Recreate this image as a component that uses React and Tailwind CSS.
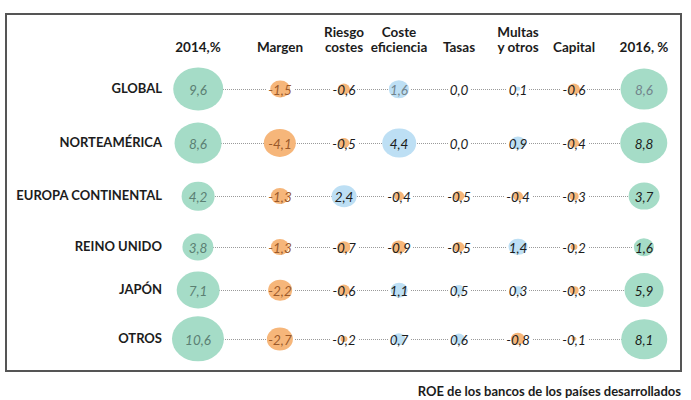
import React from "react";

const cols = "grid-cols-[191px_82px_64px_55px_60px_59px_56px_70px_36px]";

const headers = [
  ["2014,%"],
  ["Margen"],
  ["Riesgo", "costes"],
  ["Coste", "eficiencia"],
  ["Tasas"],
  ["Multas", "y otros"],
  ["Capital"],
  ["2016, %"],
];

const rows = [
  { name: "GLOBAL", h: "h-[54px]", v: [9.6, -1.5, -0.6, 1.6, 0.0, 0.1, -0.6, 8.6] },
  { name: "NORTEAMÉRICA", h: "h-[54px]", v: [8.6, -4.1, -0.5, 4.4, 0.0, 0.9, -0.4, 8.8] },
  { name: "EUROPA CONTINENTAL", h: "h-[52px]", v: [4.2, -1.3, 2.4, -0.4, -0.5, -0.4, -0.3, 3.7] },
  { name: "REINO UNIDO", h: "h-[50px]", v: [3.8, -1.3, -0.7, -0.9, -0.5, 1.4, -0.2, 1.6] },
  { name: "JAPÓN", h: "h-[36px]", v: [7.1, -2.2, -0.6, 1.1, 0.5, 0.3, -0.3, 5.9] },
  { name: "OTROS", h: "h-[62px]", v: [10.6, -2.7, -0.2, 0.7, 0.6, -0.8, -0.1, 8.1] },
];

function bubbleColor(col, v) {
  if (col === 0 || col === 7) return "#a5dcc7";
  return v < 0 ? "#f6b67a" : "#bddff4";
}

function textColor(row, col) {
  if (col === 0) return "text-[#5b8073]";
  if (col === 1) return "text-[#9b5a2b]";
  if (row === 0 && (col === 3 || col === 7)) return "text-[#72848c]";
  return "text-[#1c1c1c]";
}

function Cell({ value, row, col }) {
  const w = 16 * Math.sqrt(Math.abs(value));
  return (
    <div className="w-0 flex justify-center">
      <span className="relative shrink-0 bg-white px-[2px] whitespace-nowrap">
        {w > 0 && (
          <span
            className="absolute left-1/2 top-1/2 -translate-x-1/2 -translate-y-1/2 rounded-[50%] z-0"
            style={{ width: w, height: w * 0.87, background: bubbleColor(col, value) }}
          />
        )}
        <span className={`relative italic text-[13.5px] leading-[16px] ${textColor(row, col)}`}>
          {value.toFixed(1).replace(".", ",")}
        </span>
      </span>
    </div>
  );
}

export default function App() {
  return (
    <div className="w-[691px] h-[400px] bg-white font-['Lato','Liberation_Sans',sans-serif] text-[#1c1c1c]">
      <div className="ml-[5px] mt-[13px] w-[677px] border-2 border-[#555]">
        {/* Header */}
        <div className={`grid ${cols} h-[47px] items-end pb-[7px]`}>
          <div />
          {headers.map((lines, i) => (
            <div key={i} className="w-0 flex justify-center">
              <div className="shrink-0 whitespace-nowrap text-center font-bold text-[13.5px] leading-[15px]">
                {lines.map((l) => (
                  <div key={l}>{l}</div>
                ))}
              </div>
            </div>
          ))}
        </div>

        {rows.map((r, ri) => (
          <div key={r.name} className={`relative grid ${cols} ${r.h} items-center`}>
            <div className="absolute left-[191px] w-[446px] top-1/2 border-t border-dotted border-[#9a9a9a]" />
            <div className="text-right pr-[36px] font-bold text-[13px] whitespace-nowrap">{r.name}</div>
            {r.v.map((v, ci) => (
              <Cell key={ci} value={v} row={ri} col={ci} />
            ))}
          </div>
        ))}
      </div>

      <div className="w-[677px] ml-[5px] mt-[11px] text-right pr-px font-bold text-[13px] leading-[16px]">
        ROE de los bancos de los países desarrollados
      </div>
    </div>
  );
}
